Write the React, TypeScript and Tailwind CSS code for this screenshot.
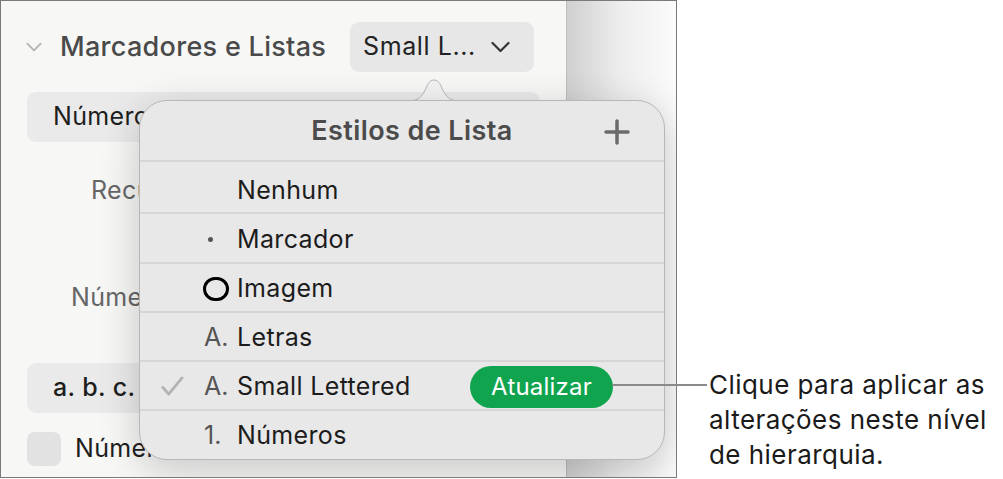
import React from 'react';

const font = { fontFamily: 'Inter, "Noto Sans", sans-serif' };

function Chevron({ className }: { className?: string }) {
  return (
    <svg viewBox="0 0 20 12" className={className} fill="none" stroke="currentColor" strokeWidth="2.2" strokeLinecap="round" strokeLinejoin="round">
      <path d="M2 2 L10 10 L18 2" />
    </svg>
  );
}

type Row = { check?: boolean; prefix?: React.ReactNode; label: string; h: string; button?: boolean };

const rows: Row[] = [
  { label: 'Nenhum', h: 'h-[52px] pt-[7px]' },
  { prefix: <span className="block w-[5px] h-[5px] rounded-full bg-[#555] ml-[4px]" />, label: 'Marcador', h: 'h-[50px] pt-[3px]' },
  { prefix: <span className="block w-[26px] h-[24px] rounded-full border-[3px] border-black -ml-[1px]" />, label: 'Imagem', h: 'h-[49px] pt-[2px]' },
  { prefix: 'A.', label: 'Letras', h: 'h-[49px] pt-[2px]' },
  { check: true, prefix: 'A.', label: 'Small Lettered', h: 'h-[49px] pt-[2px]', button: true },
  { prefix: '1.', label: 'Números', h: 'flex-1 pt-[2px]' },
];

export default function App() {
  return (
    <div className="relative w-[1003px] h-[479px] bg-white overflow-hidden" style={font}>
      {/* screenshot frame */}
      <div className="relative w-[677px] h-[478px] border border-[#7a7a7a] flex overflow-hidden">
        {/* sidebar */}
        <div className="w-[566px] shrink-0 bg-[#f7f7f6] border-r border-[#bdbdbd] flex flex-col">
          <div className="mt-[21px] h-[50px] flex items-center pl-[24px] pr-[32px]">
            <Chevron className="w-[18px] h-[10px] text-[#b4b4b4]" />
            <span className="ml-[17px] text-[27px] tracking-[0.3px] font-medium text-[#4a4a4a]">Marcadores e Listas</span>
            <div className="ml-auto h-[50px] w-[184px] rounded-[9px] bg-[#e7e7e7] flex items-center pl-[13px] gap-[13px]">
              <span className="text-[25px] tracking-[0.6px] text-[#222]">Small L...</span>
              <Chevron className="w-[23px] h-[12px] text-[#333]" />
            </div>
          </div>
          <div className="mt-[20px] mx-[26px] h-[50px] rounded-[9px] bg-[#eaeaea] flex items-center pl-[26px] text-[25px] tracking-[0.35px] text-[#1e1e1e]">
            Números
          </div>
          <div className="mt-[34px] pl-[90px] h-[28px] text-[25px] tracking-[0.35px] text-[#666] leading-[28px]">Recuo</div>
          <div className="mt-[79px] pl-[70px] h-[28px] text-[25px] tracking-[0.35px] text-[#666] leading-[28px]">Número inicial</div>
          <div className="mt-[52px] mx-[26px] h-[50px] rounded-[9px] bg-[#eaeaea] flex items-center pl-[26px] text-[25px] tracking-[0.35px] font-medium text-[#1e1e1e]">
            a. b. c.
          </div>
          <div className="mt-[17px] pl-[26px] flex items-center gap-[14px]">
            <span className="w-[34px] h-[34px] rounded-[8px] bg-[#e2e2e2]" />
            <span className="text-[25px] tracking-[0.35px] text-[#1e1e1e]">Números Ordenados</span>
          </div>
        </div>
        {/* canvas */}
        <div className="flex-1 bg-gradient-to-r from-[#d0d0d0] via-[#eeeeee] to-[#fbfbfb]" />

        {/* popover arrow */}
        <svg className="absolute left-[406px] top-[75px] w-[54px] h-[26px]" viewBox="0 0 54 26">
          <path d="M0 25 C11 25 15 22 20 10 C23 2 31 2 34 10 C39 22 43 25 54 25 Z" fill="#f3f3f3" stroke="#b9b9b9" strokeWidth="1" />
        </svg>
        {/* popover */}
        <div className="absolute left-[138px] top-[99px] w-[526px] h-[360px] rounded-[28px] border border-[#b7b7b7] bg-[#e8e8e8] shadow-[0_10px_40px_rgba(0,0,0,0.2)] flex flex-col overflow-hidden">
          <div className="h-[59px] shrink-0 flex items-center relative pt-[2px]">
            <span className="flex-1 text-center pl-[20px] text-[27px] tracking-[0.4px] font-semibold text-[#4b4b4b]">Estilos de Lista</span>
            <svg viewBox="0 0 26 26" className="absolute right-[34px] top-[18px] w-[26px] h-[26px]" stroke="#6b6b6b" strokeWidth="3.5" strokeLinecap="round">
              <path d="M13 2 V24 M2 13 H24" />
            </svg>
          </div>
          {rows.map((r) => (
            <div key={r.label} className={`${r.h} shrink-0 border-t-2 border-[#d6d6d6] flex items-center`}>
              <div className="w-[64px] pl-[21px] shrink-0">
                {r.check && (
                  <svg viewBox="0 0 24 22" className="w-[23px] h-[21px]" fill="none" stroke="#b3b3b3" strokeWidth="3" strokeLinecap="round" strokeLinejoin="round">
                    <path d="M2 12 L8 19 L22 2" />
                  </svg>
                )}
              </div>
              <div className="w-[33px] shrink-0 text-[25px] text-[#555] flex items-center">{r.prefix}</div>
              <span className="text-[25px] tracking-[0.35px] text-[#1c1c1c]">{r.label}</span>
              {r.button && (
                <div className="ml-auto mr-[51px] w-[143px] h-[42px] rounded-full bg-[#10a44f] text-white text-[24px] tracking-[0.2px] flex items-center justify-center">
                  Atualizar
                </div>
              )}
            </div>
          ))}
        </div>
      </div>

      {/* callout */}
      <div className="absolute left-[612px] top-[384px] w-[95px] h-[2px] bg-[#8a8a8a]" />
      <div className="absolute left-[709px] top-[367px] text-[26px] tracking-[0.45px] leading-[35px] text-[#1a1a1a]">
        <div>Clique para aplicar as</div>
        <div>alterações neste nível</div>
        <div>de hierarquia.</div>
      </div>
    </div>
  );
}
